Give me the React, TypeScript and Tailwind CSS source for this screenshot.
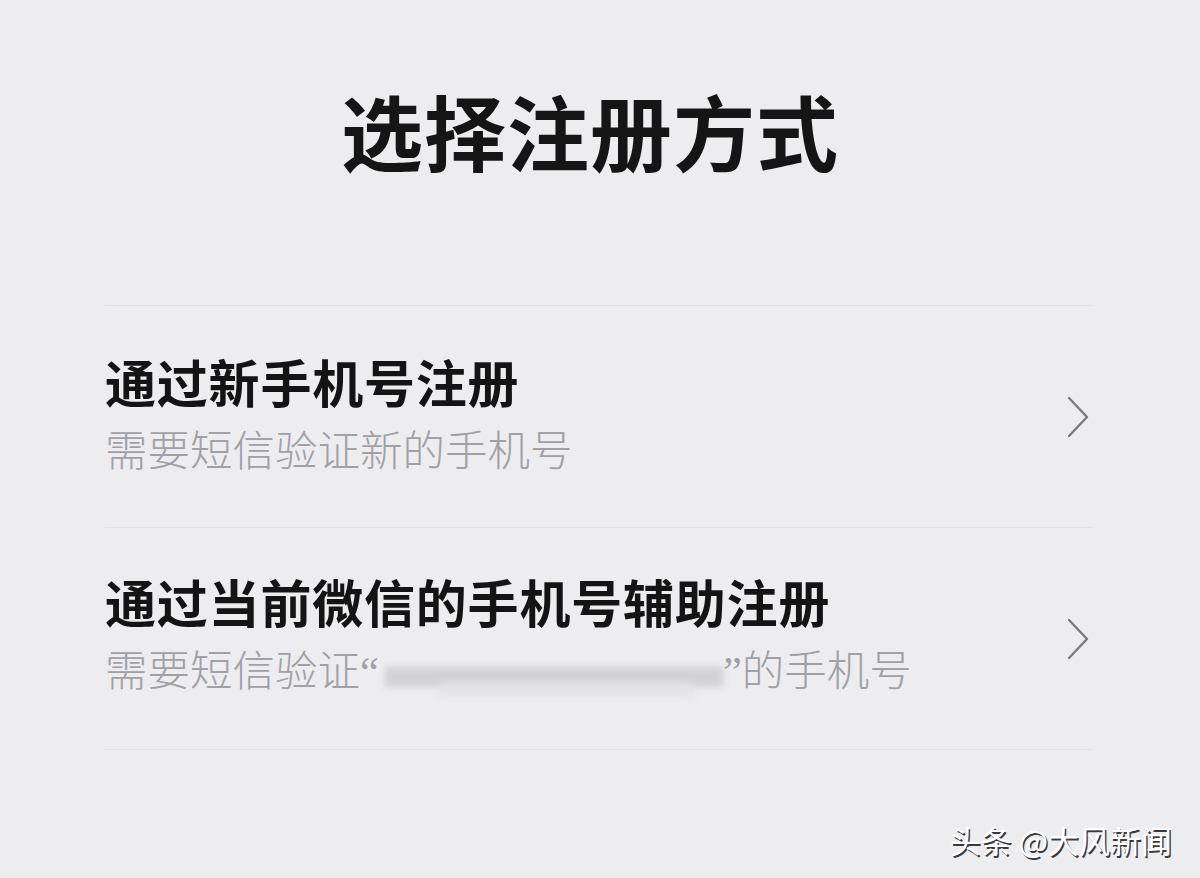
const Chevron = () => (
  <svg width="24" height="42" viewBox="0 0 24 42" fill="none" className="shrink-0">
    <polyline
      points="3,2 21,21 3,40"
      stroke="#7b7b7f"
      strokeWidth="2.4"
      strokeLinecap="round"
      strokeLinejoin="round"
    />
  </svg>
);

const options = [
  { id: 1, title: '通过新手机号注册', masked: false },
  { id: 2, title: '通过当前微信的手机号辅助注册', masked: true },
];

const App = () => {
  return (
    <div
      className="relative w-[1200px] h-[878px] overflow-hidden bg-[#ededf0]"
      style={{ fontFamily: '"Noto Sans CJK SC", "Noto Sans", sans-serif' }}
    >
      {/* Title */}
      <h1 className="pt-[89px] pr-[20px] text-center text-[82px] leading-[82px] font-bold tracking-[1px] text-[#151515]">
        选择注册方式
      </h1>

      {/* Options */}
      <div className="mt-[134px] ml-[105px] mr-[107px] border-t border-[#e2e2e5]">
        {options.map((opt) => (
          <div
            key={opt.id}
            className="flex items-center justify-between h-[222px] border-b border-[#e2e2e5] pr-[3px]"
          >
            <div className="flex flex-col gap-[19px] pb-[8px]">
              <div className="text-[51px] leading-[52px] font-bold tracking-[0.8px] text-[#141414]">
                {opt.title}
              </div>
              <div className="text-[42.5px] leading-[44px] font-light text-[#a1a1a5] whitespace-nowrap">
                {opt.masked ? (
                  <>
                    需要短信验证
                    <span style={{ fontFamily: '"Liberation Serif", serif' }}>“</span>
                    <span className="relative inline-block w-[344px] h-[30px] align-middle">
                      <span className="absolute left-[6px] right-0 top-[8px] h-[20px] bg-[#d2d2d5] blur-[3px]" />
                      <span className="absolute left-[60px] right-[30px] top-[24px] h-[14px] bg-[#e4e4e7] blur-[4px]" />
                    </span>
                    <span style={{ fontFamily: '"Liberation Serif", serif' }}>”</span>
                    的手机号
                  </>
                ) : (
                  '需要短信验证新的手机号'
                )}
              </div>
            </div>
            <Chevron />
          </div>
        ))}
      </div>

      {/* Watermark */}
      <div
        className="absolute right-[28px] bottom-[20px] text-[31px] leading-[36px] text-white"
        style={{ textShadow: '1.5px 1.5px 0 rgba(0,0,0,0.75)' }}
      >
        头条 @大风新闻
      </div>
    </div>
  );
};

export default App;
